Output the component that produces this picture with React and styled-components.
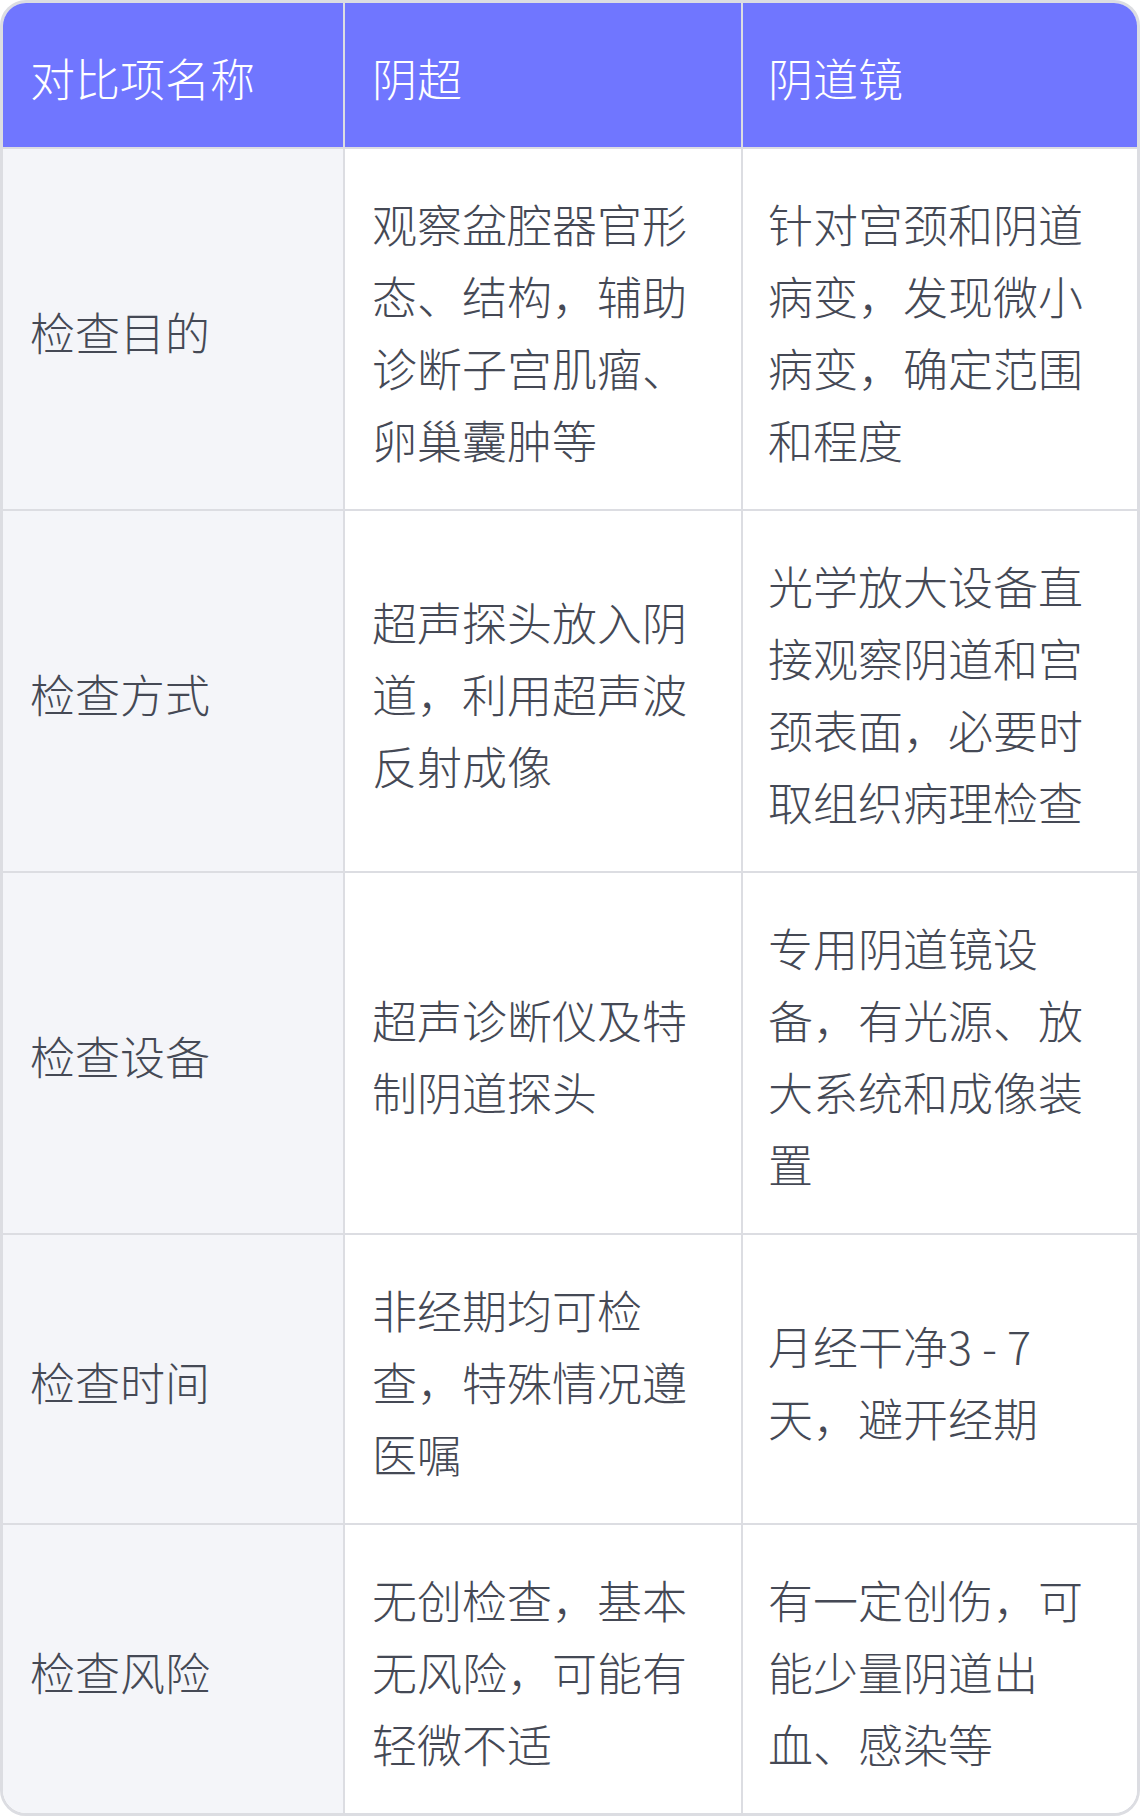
import styled, { createGlobalStyle } from "styled-components";

const GlobalStyle = createGlobalStyle`
    body {
        margin: 0;
        background: #ffffff;
        font-family: "Noto Sans CJK SC", "Noto Sans", sans-serif;
    }
`

const columns = ["对比项名称", "阴超", "阴道镜"];

const rows = [
    ["检查目的", "观察盆腔器官形态、结构，辅助诊断子宫肌瘤、卵巢囊肿等", "针对宫颈和阴道病变，发现微小病变，确定范围和程度"],
    ["检查方式", "超声探头放入阴道，利用超声波反射成像", "光学放大设备直接观察阴道和宫颈表面，必要时取组织病理检查"],
    ["检查设备", "超声诊断仪及特制阴道探头", "专用阴道镜设备，有光源、放大系统和成像装置"],
    ["检查时间", "非经期均可检查，特殊情况遵医嘱", "月经干净3 - 7 天，避开经期"],
    ["检查风险", "无创检查，基本无风险，可能有轻微不适", "有一定创伤，可能少量阴道出血、感染等"],
];

export default function App() {
    return (
        <>
            <GlobalStyle />
            <Table>
                {columns.map((c, i) => (
                    <HeadCell key={c} $last={i === columns.length - 1}>{c}</HeadCell>
                ))}
                {rows.map((row, r) =>
                    row.map((text, i) => (
                        <Cell
                            key={`${r}-${i}`}
                            $label={i === 0}
                            $last={i === row.length - 1}
                            $bottom={r === rows.length - 1}
                        >
                            {text}
                        </Cell>
                    ))
                )}
            </Table>
        </>
    )
}

const Table = styled.div`
    width: 1140px;
    box-sizing: border-box;
    display: grid;
    grid-template-columns: 342px 398px 1fr;

    border: 3px solid #dcdde2;
    border-radius: 26px;
    overflow: hidden;
    background: #ffffff;
`

const HeadCell = styled.div`
    box-sizing: border-box;
    height: 146px;
    padding: 39px 27px 33px;
    padding-left: ${(p) => p.$last ? "25px" : "27px"};
    display: flex;
    align-items: center;

    background: #7076ff;
    color: #ffffff;
    font-size: 45px;
    font-weight: 300;
    line-height: 72px;

    border-right: ${(p) => p.$last ? "none" : "2px solid #dcdde2"};
    border-bottom: 2px solid #dcdde2;
`

const Cell = styled.div`
    box-sizing: border-box;
    padding: 39px 27px 33px;
    padding-left: ${(p) => p.$last ? "25px" : "27px"};
    display: flex;
    align-items: center;

    background: ${(p) => p.$label ? "#f4f5f9" : "#ffffff"};
    color: #454955;
    font-size: 45px;
    font-weight: 300;
    line-height: 72px;
    word-break: break-all;

    border-right: ${(p) => p.$last ? "none" : "2px solid #dcdde2"};
    border-bottom: ${(p) => p.$bottom ? "none" : "2px solid #dcdde2"};
`
